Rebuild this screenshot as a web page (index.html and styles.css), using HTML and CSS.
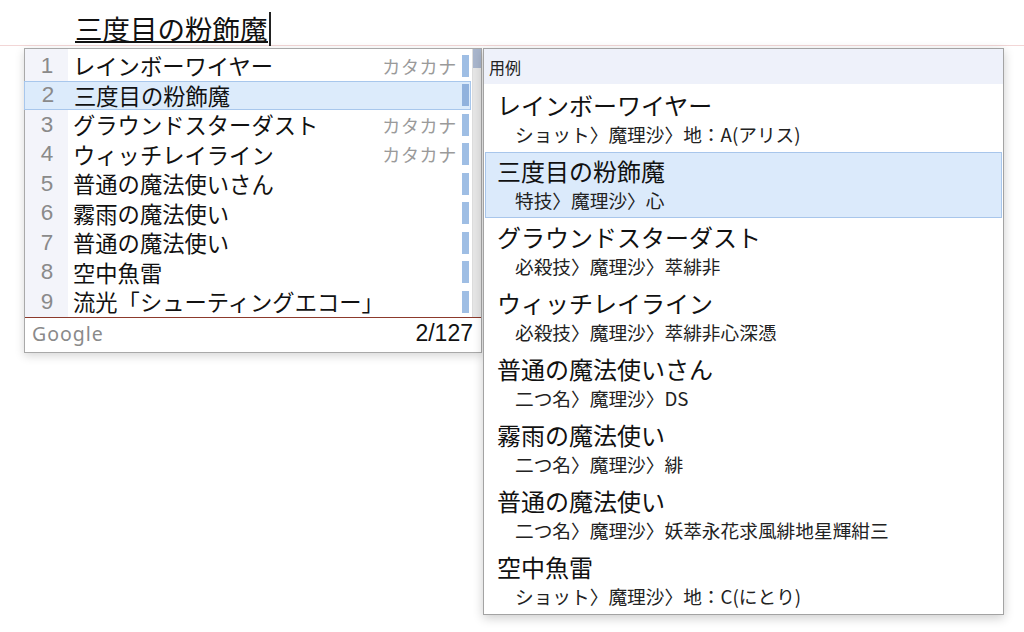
FILE: index.html
```html
<!DOCTYPE html>
<html lang="ja">
<head>
<meta charset="utf-8">
<title>IME</title>
<link rel="stylesheet" href="styles.css">
</head>
<body>
<div class="editor">
  <span class="composition">三度目の粉飾魔</span><span class="caret"></span>
</div>
<div class="popups">
  <div class="cands">
    <div class="cands-body">
      <div class="list">
        <div class="row"><span class="num">1</span><span class="word">レインボーワイヤー</span><span class="kind">カタカナ</span><span class="seg"></span></div>
        <div class="row sel"><span class="num">2</span><span class="word">三度目の粉飾魔</span><span class="kind"></span><span class="seg"></span></div>
        <div class="row"><span class="num">3</span><span class="word">グラウンドスターダスト</span><span class="kind">カタカナ</span><span class="seg"></span></div>
        <div class="row"><span class="num">4</span><span class="word">ウィッチレイライン</span><span class="kind">カタカナ</span><span class="seg"></span></div>
        <div class="row"><span class="num">5</span><span class="word">普通の魔法使いさん</span><span class="kind"></span><span class="seg"></span></div>
        <div class="row"><span class="num">6</span><span class="word">霧雨の魔法使い</span><span class="kind"></span><span class="seg"></span></div>
        <div class="row"><span class="num">7</span><span class="word">普通の魔法使い</span><span class="kind"></span><span class="seg"></span></div>
        <div class="row"><span class="num">8</span><span class="word">空中魚雷</span><span class="kind"></span><span class="seg"></span></div>
        <div class="row"><span class="num">9</span><span class="word">流光「シューティングエコー」</span><span class="kind"></span><span class="seg"></span></div>
      </div>
      <div class="track"><div class="thumb"></div></div>
    </div>
    <div class="footer">
      <span class="brand">Google</span>
      <span class="count">2/127</span>
    </div>
  </div>
  <div class="usage">
    <div class="usage-head">用例</div>
    <div class="items">
      <div class="item"><div class="title">レインボーワイヤー</div><div class="sub">ショット〉魔理沙〉地：A(アリス)</div></div>
      <div class="item sel"><div class="title">三度目の粉飾魔</div><div class="sub">特技〉魔理沙〉心</div></div>
      <div class="item"><div class="title">グラウンドスターダスト</div><div class="sub">必殺技〉魔理沙〉萃緋非</div></div>
      <div class="item"><div class="title">ウィッチレイライン</div><div class="sub">必殺技〉魔理沙〉萃緋非心深憑</div></div>
      <div class="item"><div class="title">普通の魔法使いさん</div><div class="sub">二つ名〉魔理沙〉DS</div></div>
      <div class="item"><div class="title">霧雨の魔法使い</div><div class="sub">二つ名〉魔理沙〉緋</div></div>
      <div class="item"><div class="title">普通の魔法使い</div><div class="sub">二つ名〉魔理沙〉妖萃永花求風緋地星輝紺三</div></div>
      <div class="item"><div class="title">空中魚雷</div><div class="sub">ショット〉魔理沙〉地：C(にとり)</div></div>
    </div>
  </div>
</div>
</body>
</html>
```

FILE: styles.css
```css
html, body {
  margin: 0;
  padding: 0;
  background: #ffffff;
}
body {
  font-family: "Noto Sans CJK JP", "Noto Sans", sans-serif;
  color: #111;
  width: 1024px;
  height: 632px;
  overflow: hidden;
}
.editor {
  height: 45px;
  border-bottom: 1px solid #f2d6d6;
  display: flex;
  align-items: flex-start;
  padding-left: 75px;
}
.composition {
  margin-top: 15px;
  font-size: 27.5px;
  line-height: 26px;
  border-bottom: 2.5px solid #111;
  color: #111;
  white-space: nowrap;
}
.caret {
  width: 2px;
  height: 34px;
  margin-top: 12px;
  margin-left: 1px;
  background: #222;
}
.popups {
  display: flex;
  align-items: flex-start;
  margin-top: 2px;
  margin-left: 24px;
  gap: 1px;
}
.cands {
  width: 458px;
  box-sizing: border-box;
  border: 1px solid #a9a9a9;
  background: #fff;
  box-shadow: 0 3px 9px rgba(0,0,0,0.16);
}
.cands-body {
  display: flex;
}
.list {
  flex: 1;
  padding-top: 2px;
  background: linear-gradient(to right, #f3f4fa 43px, #fff 43px);
}
.row {
  height: 29.5px;
  box-sizing: border-box;
  display: flex;
  align-items: center;
  white-space: nowrap;
}
.row.sel {
  background: #dcebfb;
  border: 1px solid #a8c7ec;
  margin-left: -1px;
  margin-right: 1px;
}
.num {
  width: 43px;
  text-align: center;
  font-family: "Liberation Sans", Arial, sans-serif;
  font-size: 22.5px;
  color: #8a8a8a;
  padding-left: 1px;
  box-sizing: border-box;
}
.row.sel .num { width: 44px; padding-left: 2px; }
.word {
  flex: 1;
  padding-left: 5px;
  font-size: 22.3px;
  line-height: 29px;
  color: #111;
}
.kind {
  font-size: 18px;
  color: #9a9a9a;
  letter-spacing: 0.7px;
}
.seg {
  width: 7px;
  height: 22px;
  margin-left: 5px;
  margin-right: 3px;
  background: #9fbee4;
}
.row.sel .seg { background: #91b2dd; margin-right: 1px; }
.track {
  width: 8px;
  background: #e6e6e6;
  border-left: 1px solid #dcdcdc;
}
.thumb {
  height: 19px;
  background: #a9b6cd;
}
.footer {
  height: 34px;
  border-top: 1px solid #8c3a2c;
  display: flex;
  align-items: center;
  justify-content: space-between;
  padding: 0 8px 0 7px;
}
.brand {
  font-family: "Noto Sans", sans-serif;
  font-size: 19.5px;
  color: #8a8a8a;
  letter-spacing: 1px;
  margin-top: -2px;
}
.count {
  font-family: "Liberation Sans", Arial, sans-serif;
  font-size: 23px;
  color: #111;
  margin-top: -2px;
}
.usage {
  width: 521px;
  box-sizing: border-box;
  border: 1px solid #a3a3a3;
  background: #fff;
  box-shadow: 0 3px 10px rgba(0,0,0,0.2);
}
.usage-head {
  height: 35px;
  background: #eef1fa;
  display: flex;
  align-items: center;
  padding-left: 5px;
  font-size: 16px;
  color: #222;
}
.items {
  padding-top: 2px;
}
.item {
  height: 66px;
  box-sizing: border-box;
  margin: 0 1px;
  padding: 4px 0 0 12px;
  white-space: nowrap;
}
.item.sel {
  background: #dbeafb;
  border: 1px solid #a8c6eb;
  padding: 3px 0 0 11px;
}
.title {
  font-size: 24px;
  line-height: 30px;
  color: #111;
}
.sub {
  padding-left: 18px;
  font-size: 18.7px;
  line-height: 28px;
  color: #222;
}
```
